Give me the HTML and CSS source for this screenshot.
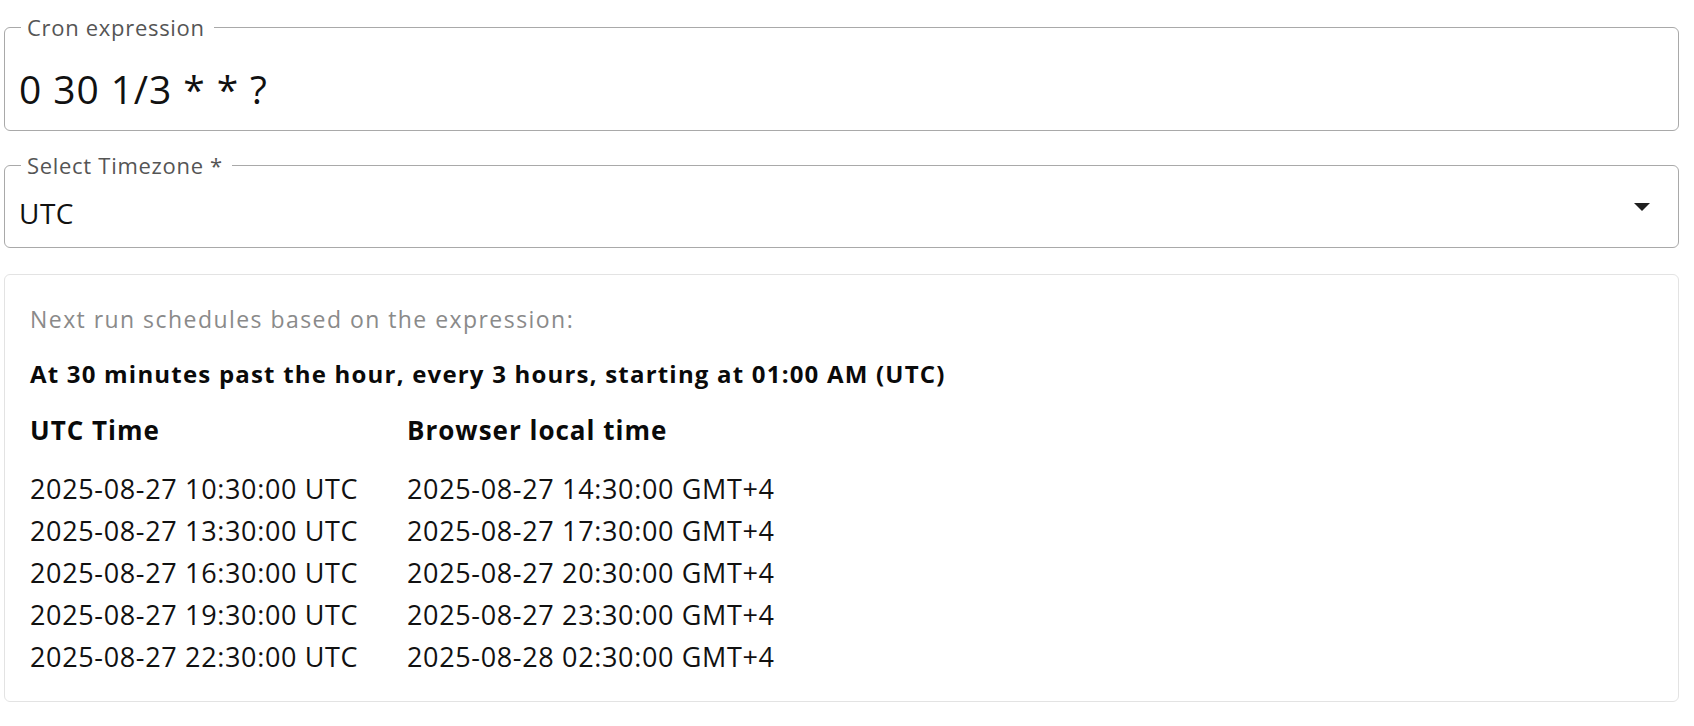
FILE: index.html
```html
<!DOCTYPE html>
<html lang="en">
<head>
<meta charset="utf-8">
<title>Cron expression</title>
<link rel="stylesheet" href="styles.css">
</head>
<body>
<main class="page">
  <fieldset class="field field-cron">
    <legend class="field-label">Cron expression</legend>
    <div class="cron-value">0 30 1/3 * * ?</div>
  </fieldset>

  <fieldset class="field field-tz">
    <legend class="field-label">Select Timezone *</legend>
    <div class="select-row">
      <span class="select-value">UTC</span>
      <svg class="select-arrow" viewBox="0 0 16 8" width="16" height="8" aria-hidden="true"><path d="M0 0h16L8 8z" fill="#1f1f1f"/></svg>
    </div>
  </fieldset>

  <section class="panel">
    <p class="panel-hint">Next run schedules based on the expression:</p>
    <p class="panel-desc">At 30 minutes past the hour, every 3 hours, starting at 01:00 AM (UTC)</p>
    <div class="schedule">
      <div class="col-head">UTC Time</div>
      <div class="col-head">Browser local time</div>
      <div class="cell">2025-08-27 10:30:00 UTC</div>
      <div class="cell">2025-08-27 14:30:00 GMT+4</div>
      <div class="cell">2025-08-27 13:30:00 UTC</div>
      <div class="cell">2025-08-27 17:30:00 GMT+4</div>
      <div class="cell">2025-08-27 16:30:00 UTC</div>
      <div class="cell">2025-08-27 20:30:00 GMT+4</div>
      <div class="cell">2025-08-27 19:30:00 UTC</div>
      <div class="cell">2025-08-27 23:30:00 GMT+4</div>
      <div class="cell">2025-08-27 22:30:00 UTC</div>
      <div class="cell">2025-08-28 02:30:00 GMT+4</div>
    </div>
  </section>
</main>
</body>
</html>
```

FILE: styles.css
```css
html, body {
  margin: 0;
  padding: 0;
  background: #ffffff;
}

body {
  font-family: "Open Sans", "Noto Sans", sans-serif;
  color: #111111;
}

.page {
  display: flex;
  flex-direction: column;
  padding: 15px 15px 0 4px;
}

.field {
  margin: 0;
  border: 1.5px solid #a9a9a9;
  border-radius: 6px;
  padding: 0 14px;
  min-width: 0;
  box-sizing: border-box;
}

.field-label {
  margin-left: 2px;
  padding: 0 9px 0 6px;
  font-size: 22px;
  line-height: 24px;
  color: #555555;
  letter-spacing: 0.7px;
}

.field-cron {
  height: 116px;
}

.cron-value {
  font-size: 39px;
  line-height: 46px;
  padding-top: 27px;
  letter-spacing: 0.9px;
  color: #111111;
}

.field-tz {
  margin-top: 22px;
  height: 95px;
}

.select-row {
  display: flex;
  align-items: flex-start;
  justify-content: space-between;
  padding-right: 14px;
}

.select-value {
  padding-top: 19px;
  font-size: 28px;
  line-height: 34px;
  letter-spacing: 0.5px;
}

.select-arrow {
  display: block;
  margin-top: 26px;
}

.panel {
  margin-top: 26px;
  border: 1.5px solid #e3e3e3;
  border-radius: 6px;
  padding: 29px 24px 0 25px;
  height: 428px;
  box-sizing: border-box;
}

.panel-hint {
  margin: 0;
  font-size: 23px;
  line-height: 30px;
  letter-spacing: 1.45px;
  color: #8a8a8a;
}

.panel-desc {
  margin: 25px 0 0;
  font-size: 24px;
  line-height: 30px;
  letter-spacing: 1.2px;
  font-weight: 700;
  color: #0a0a0a;
}

.schedule {
  margin-top: 24px;
  display: grid;
  grid-template-columns: 377px auto;
  justify-content: start;
}

.col-head {
  font-size: 26px;
  line-height: 34px;
  letter-spacing: 1px;
  font-weight: 700;
  color: #0a0a0a;
  margin-bottom: 21px;
}

.cell {
  font-size: 27px;
  line-height: 42px;
  letter-spacing: 0.65px;
  color: #111111;
}
```
